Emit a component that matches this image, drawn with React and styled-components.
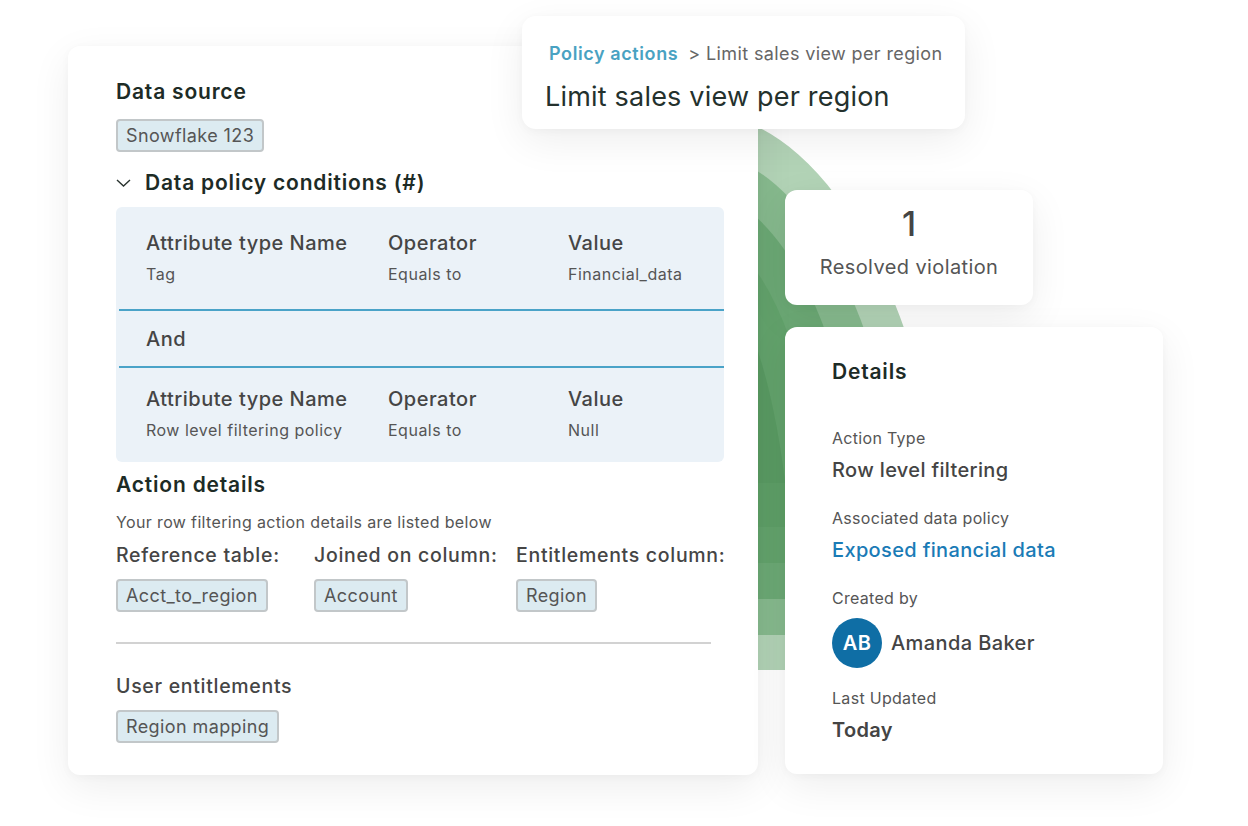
import React from "react";
import styled, { createGlobalStyle } from "styled-components";

const Global = createGlobalStyle`
  html, body { margin: 0; padding: 0; background: #ffffff; }
  body { font-family: Inter, "Noto Sans", sans-serif; -webkit-font-smoothing: antialiased; }
  * { box-sizing: border-box; }
`;

const Stage = styled.div`
  position: relative;
  width: 1248px;
  height: 826px;
  overflow: hidden;
  background: #fff;
`;

const Decor = styled.svg`
  position: absolute;
  left: 0;
  top: 0;
  width: 1248px;
  height: 826px;
  z-index: 0;
`;

const Layout = styled.div`
  position: relative;
  z-index: 1;
  display: flex;
  align-items: flex-start;
  padding: 46px 0 0 68px;
  gap: 27px;
`;

const Card = styled.div`
  background: #fff;
  border-radius: 12px;
  box-shadow: 0 12px 40px rgba(0, 0, 0, 0.07), 0 2px 10px rgba(0, 0, 0, 0.03);
`;

const MainCard = styled(Card)`
  width: 690px;
  height: 729px;
  padding: 34px 34px 0 48px;
  display: flex;
  flex-direction: column;
`;

const Heading = styled.h2`
  margin: 0;
  font-size: 21px;
  line-height: 24px;
  font-weight: 600;
  color: #1d2b26;
  letter-spacing: 0.8px;
`;

const Chip = styled.span`
  display: inline-flex;
  align-items: center;
  align-self: flex-start;
  justify-self: start;
  height: 33px;
  padding: 0 8px;
  background: #dcebf1;
  border: 2px solid #c2c7c9;
  border-radius: 4px;
  font-size: 18px;
  color: #555;
  letter-spacing: 0.4px;
  white-space: nowrap;
`;

const CondHead = styled.div`
  display: flex;
  align-items: center;
  gap: 14px;
  margin-top: 19px;
`;

const CondBox = styled.div`
  margin-top: 12px;
  width: 608px;
  background: #ebf2f8;
  border-radius: 6px;
  display: flex;
  flex-direction: column;
`;

const CondRow = styled.div`
  display: grid;
  grid-template-columns: 242px 180px 1fr;
  padding: ${(p) => p.$pad};
  row-gap: 9px;
`;

const CondDivider = styled.div`
  height: 2px;
  margin-left: 3px;
  background: #4aa3c8;
`;

const ColHead = styled.div`
  font-size: 20px;
  line-height: 24px;
  color: #454545;
  font-weight: 450;
  letter-spacing: 0.5px;
  white-space: nowrap;
`;

const ColVal = styled.div`
  font-size: 16px;
  line-height: 20px;
  color: #555;
  letter-spacing: 0.5px;
  white-space: nowrap;
`;

const AndRow = styled.div`
  height: 55px;
  display: flex;
  align-items: center;
  padding-left: 30px;
  font-size: 20px;
  color: #454545;
  font-weight: 450;
  letter-spacing: 0.5px;
`;

const Sub = styled.p`
  margin: 15px 0 0;
  font-size: 16px;
  line-height: 20px;
  color: #555;
  letter-spacing: 0.36px;
`;

const Fields = styled.div`
  display: grid;
  grid-template-columns: 198px 202px 1fr;
  margin-top: 11px;
  row-gap: 12px;
`;

const FieldLabel = styled.div`
  font-size: 19.5px;
  line-height: 24px;
  color: #454545;
  font-weight: 450;
  letter-spacing: 0.7px;
  white-space: nowrap;
`;

const Rule = styled.hr`
  margin: 30px 0 0;
  width: 595px;
  border: 0;
  height: 2px;
  background: #d2d2d2;
`;

const SectionLabel = styled.div`
  margin-top: 30px;
  font-size: 19.5px;
  line-height: 24px;
  color: #454545;
  font-weight: 450;
  letter-spacing: 0.7px;
`;

const HeaderCard = styled(Card)`
  position: absolute;
  z-index: 2;
  left: 522px;
  top: 16px;
  width: 443px;
  height: 113px;
  border-radius: 14px;
  padding: 26px 0 0 23px;
`;

const Crumbs = styled.div`
  display: flex;
  align-items: center;
  gap: 10px;
  padding-left: 4px;
  font-size: 18px;
  line-height: 24px;
  color: #666;
  letter-spacing: 0.38px;
  white-space: nowrap;
`;

const CrumbLink = styled.span`
  color: #49a2c2;
  font-weight: 600;
  letter-spacing: 0.6px;
`;

const Title = styled.h1`
  margin: 15px 0 0;
  font-size: 27px;
  line-height: 32px;
  font-weight: 400;
  color: #24312d;
  letter-spacing: 0.2px;
  white-space: nowrap;
`;

const RightCol = styled.div`
  display: flex;
  flex-direction: column;
  align-items: flex-start;
  gap: 22px;
  padding-top: 144px;
`;

const StatCard = styled(Card)`
  width: 248px;
  height: 115px;
  display: flex;
  flex-direction: column;
  align-items: center;
  padding-top: 14px;
`;

const StatNum = styled.div`
  font-size: 34px;
  line-height: 40px;
  font-weight: 500;
  color: #444;
`;

const StatLabel = styled.div`
  margin-top: 10px;
  font-size: 20px;
  line-height: 26px;
  color: #555;
  letter-spacing: 0.4px;
`;

const DetailsCard = styled(Card)`
  width: 378px;
  height: 447px;
  padding: 33px 0 0 47px;
  display: flex;
  flex-direction: column;
`;

const DLabel = styled.div`
  margin-top: ${(p) => p.$mt || 0}px;
  font-size: 16px;
  line-height: 20px;
  color: #555;
  letter-spacing: 0.3px;
`;

const DValue = styled.div`
  margin-top: 10px;
  font-size: 20px;
  line-height: 24px;
  font-weight: ${(p) => p.$weight || 500};
  color: ${(p) => p.$color || "#444"};
  letter-spacing: 0.35px;
`;

const Person = styled.div`
  display: flex;
  align-items: center;
  gap: 9px;
  margin-top: 10px;
`;

const Avatar = styled.div`
  width: 50px;
  height: 50px;
  border-radius: 50%;
  background: #0f6ea5;
  color: #fff;
  display: flex;
  align-items: center;
  justify-content: center;
  font-size: 20px;
  font-weight: 600;
  letter-spacing: 0.3px;
`;

const PersonName = styled.div`
  font-size: 20px;
  line-height: 24px;
  color: #444;
  font-weight: 450;
  letter-spacing: 0.4px;
`;

const bands = [
  { rx: 255, ry: 537, bottom: 670, color: "#b2d3b6" },
  { rx: 215, ry: 497, bottom: 635, color: "#87ba8e" },
  { rx: 175, ry: 457, bottom: 599, color: "#6ca975" },
  { rx: 135, ry: 417, bottom: 563, color: "#63a36c" },
  { rx: 95, ry: 377, bottom: 527, color: "#5e9f67" },
];

function GreenDecor() {
  const cx = 700;
  const cy = 650;
  const x0 = 758;
  return (
    <Decor viewBox="0 0 1248 826">
      <defs>
        {bands.map((b, i) => (
          <clipPath id={`band${i}`} key={i}>
            <rect x={x0} y={0} width={500} height={b.bottom} />
          </clipPath>
        ))}
        <clipPath id="bandInner">
          <rect x={x0} y={0} width={500} height={483} />
        </clipPath>
      </defs>
      {bands.map((b, i) => {
        const t = (x0 - cx) / b.rx;
        const top = cy - b.ry * Math.sqrt(Math.max(0, 1 - t * t));
        const d = `M ${x0} 826 L ${x0} ${top} A ${b.rx} ${b.ry} 0 0 1 ${cx + b.rx} ${cy} L ${cx + b.rx} 826 Z`;
        return <path key={i} d={d} fill={b.color} clipPath={`url(#band${i})`} />;
      })}
      <path
        d={`M ${x0} 826 L ${x0} 352 A 95 377 0 0 1 795 650 L 795 826 Z`}
        fill="#5a9b63"
        clipPath="url(#bandInner)"
      />
    </Decor>
  );
}

const Chevron = () => (
  <svg width="15" height="10" viewBox="0 0 15 10" fill="none">
    <polyline points="1,2 7.5,8 14,2" stroke="#2a3430" strokeWidth="1.4" fill="none" />
  </svg>
);

function Condition({ name, op, value, pad }) {
  return (
    <CondRow $pad={pad}>
      <ColHead>Attribute type Name</ColHead>
      <ColHead>Operator</ColHead>
      <ColHead>Value</ColHead>
      <ColVal>{name}</ColVal>
      <ColVal>{op}</ColVal>
      <ColVal>{value}</ColVal>
    </CondRow>
  );
}

export default function App() {
  return (
    <Stage>
      <Global />
      <GreenDecor />
      <HeaderCard>
        <Crumbs>
          <CrumbLink>Policy actions</CrumbLink>
          <span>&gt; Limit sales view per region</span>
        </Crumbs>
        <Title>Limit sales view per region</Title>
      </HeaderCard>
      <Layout>
        <MainCard>
          <Heading>Data source</Heading>
          <Chip style={{ marginTop: 15 }}>Snowflake 123</Chip>
          <CondHead>
            <Chevron />
            <Heading>Data policy conditions (#)</Heading>
          </CondHead>
          <CondBox>
            <Condition name="Tag" op="Equals to" value="Financial_data" pad="24px 30px 25px" />
            <CondDivider />
            <AndRow>And</AndRow>
            <CondDivider />
            <Condition name="Row level filtering policy" op="Equals to" value="Null" pad="19px 30px 22px" />
          </CondBox>
          <Heading style={{ marginTop: 11 }}>Action details</Heading>
          <Sub>Your row filtering action details are listed below</Sub>
          <Fields>
            <FieldLabel>Reference table:</FieldLabel>
            <FieldLabel>Joined on column:</FieldLabel>
            <FieldLabel>Entitlements column:</FieldLabel>
            <Chip>Acct_to_region</Chip>
            <Chip>Account</Chip>
            <Chip>Region</Chip>
          </Fields>
          <Rule />
          <SectionLabel>User entitlements</SectionLabel>
          <Chip style={{ marginTop: 12 }}>Region mapping</Chip>
        </MainCard>
        <RightCol>
          <StatCard>
            <StatNum>1</StatNum>
            <StatLabel>Resolved violation</StatLabel>
          </StatCard>
          <DetailsCard>
            <Heading>Details</Heading>
            <DLabel $mt={44}>Action Type</DLabel>
            <DValue>Row level filtering</DValue>
            <DLabel $mt={26}>Associated data policy</DLabel>
            <DValue $color="#1a7bb6">Exposed financial data</DValue>
            <DLabel $mt={26}>Created by</DLabel>
            <Person>
              <Avatar>AB</Avatar>
              <PersonName>Amanda Baker</PersonName>
            </Person>
            <DLabel $mt={20}>Last Updated</DLabel>
            <DValue $weight={600}>Today</DValue>
          </DetailsCard>
        </RightCol>
      </Layout>
    </Stage>
  );
}
